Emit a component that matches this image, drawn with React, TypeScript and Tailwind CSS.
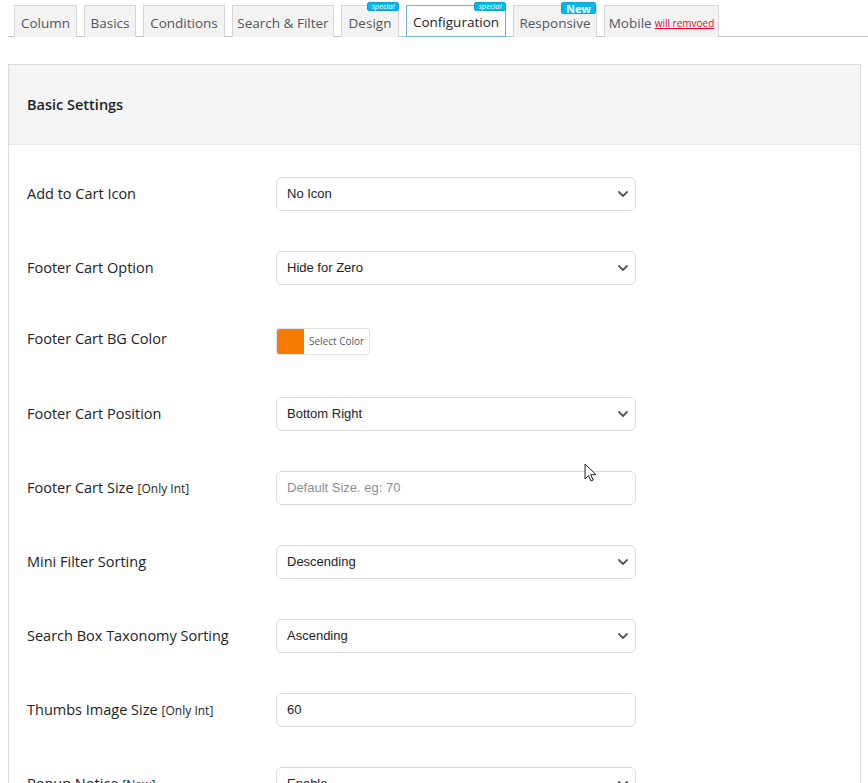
const tabs = [
  { label: "Column", w: "w-[63px]" },
  { label: "Basics", w: "w-[52px]" },
  { label: "Conditions", w: "w-[82px]" },
  { label: "Search & Filter", w: "w-[102px]" },
  { label: "Design", w: "w-[58px]", badge: "special" },
  { label: "Configuration", w: "w-[100px]", badge: "special", active: true },
  { label: "Responsive", w: "w-[84px]", badge: "New" },
  { label: "Mobile", w: "w-[115px]", note: "will remvoed" },
];

function Chevron() {
  return (
    <svg width="12" height="8" viewBox="0 0 12 8" className="absolute right-[6px] top-1/2 -translate-y-1/2">
      <path d="M2 2l4 4 4-4" fill="none" stroke="#50575e" strokeWidth="1.8" strokeLinecap="round" strokeLinejoin="round" />
    </svg>
  );
}

function SelectBox({ value }: { value: string }) {
  return (
    <div className="relative w-[360px] h-[34px] rounded-[6px] border border-[#dcdcde] bg-white flex items-center pl-[10px] text-[13px] text-[#1d2327] font-['Liberation_Sans',Arial,sans-serif]">
      {value}
      <Chevron />
    </div>
  );
}

function TextBox({ value, placeholder }: { value?: string; placeholder?: string }) {
  return (
    <div className="w-[360px] h-[34px] rounded-[6px] border border-[#dcdcde] bg-white flex items-center pl-[10px] text-[13px] font-['Liberation_Sans',Arial,sans-serif]">
      {value ? <span className="text-[#1d2327]">{value}</span> : <span className="text-[#8c8f94]">{placeholder}</span>}
    </div>
  );
}

function Row({ label, hint, children, h = "h-[74px]" }: { label: string; hint?: string; children: React.ReactNode; h?: string }) {
  return (
    <div className={`flex items-center ${h}`}>
      <div className="w-[267px] pl-[18px] text-[14.5px] text-[#1d2327]">
        {label}
        {hint && <span className="text-[12px] ml-[4px]">{hint}</span>}
      </div>
      {children}
    </div>
  );
}

export default function App() {
  return (
    <div className="relative w-[868px] h-[783px] overflow-hidden bg-white font-['Open_Sans','Noto_Sans',sans-serif]">
      {/* tabs */}
      <div className="pt-[5px] ml-[8px] border-b border-[#c3c4c7] h-[37px]">
        <div className="flex gap-[7px] pl-[6px]">
          {tabs.map((t) => (
            <div
              key={t.label}
              className={`relative h-[32px] flex items-center justify-center pt-[2px] text-[13.5px] leading-[18px] border ${t.w} ${
                t.active
                  ? "bg-white border-[#72aee6] text-[#1d2327]"
                  : "bg-[#f3f3f3] border-[#d6d6d6] border-b-0 text-[#50575e]"
              }`}
            >
              {t.badge === "New" && (
                <span className="absolute top-[-4px] right-[0px] w-[35px] h-[12px] flex items-center justify-center bg-[#00b9eb] border border-[#0aa5d0] rounded-[2px] text-white text-[11px] font-bold leading-none">
                  New
                </span>
              )}
              {t.badge === "special" && (
                <span className="absolute top-[-4px] right-[-1px] w-[32px] h-[9px] flex items-center justify-center bg-[#00b9eb] border border-[#0aa5d0] rounded-[2px] text-white text-[7.5px] italic leading-none">
                  special
                </span>
              )}
              <span>{t.label}</span>
              {t.note && <span className="ml-[3px] text-[10px] text-[#e10c1f] underline">{t.note}</span>}
            </div>
          ))}
        </div>
      </div>

      {/* panel */}
      <div className="mt-[27px] ml-[8px] w-[853px] border border-[#dcdcde] border-b-0 h-[800px]">
        <div className="h-[80px] bg-[#f5f5f5] border-b border-[#e8e8e8] flex items-center pl-[18px] text-[14.5px] font-semibold text-[#1d2327]">
          Basic Settings
        </div>
        <div className="pt-[12px]">
          <Row label="Add to Cart Icon">
            <SelectBox value="No Icon" />
          </Row>
          <Row label="Footer Cart Option">
            <SelectBox value="Hide for Zero" />
          </Row>
          <Row label="Footer Cart BG Color" h="h-[72px] pb-[4px]">
            <div className="flex h-[27px] mt-[4px] rounded-[3px] border border-[#e2e2e2] overflow-hidden">
              <div className="w-[27px] bg-[#f57c00]" />
              <div className="px-[5px] flex items-center text-[10px] text-[#50575e]">Select Color</div>
            </div>
          </Row>
          <Row label="Footer Cart Position">
            <SelectBox value="Bottom Right" />
          </Row>
          <Row label="Footer Cart Size" hint="[Only Int]">
            <TextBox placeholder="Default Size. eg: 70" />
          </Row>
          <Row label="Mini Filter Sorting">
            <SelectBox value="Descending" />
          </Row>
          <Row label="Search Box Taxonomy Sorting">
            <SelectBox value="Ascending" />
          </Row>
          <Row label="Thumbs Image Size" hint="[Only Int]">
            <TextBox value="60" />
          </Row>
          <Row label="Popup Notice" hint="[New]">
            <SelectBox value="Enable" />
          </Row>
        </div>
      </div>

      {/* mouse cursor */}
      <svg width="14" height="20" viewBox="0 0 14 20" className="absolute left-[584px] top-[463px]">
        <path d="M1 1v15l3.5-3.5 2.5 5.5 2.2-1-2.5-5.3H12z" fill="white" stroke="#1d2327" strokeWidth="1" strokeLinejoin="round" />
      </svg>
    </div>
  );
}
